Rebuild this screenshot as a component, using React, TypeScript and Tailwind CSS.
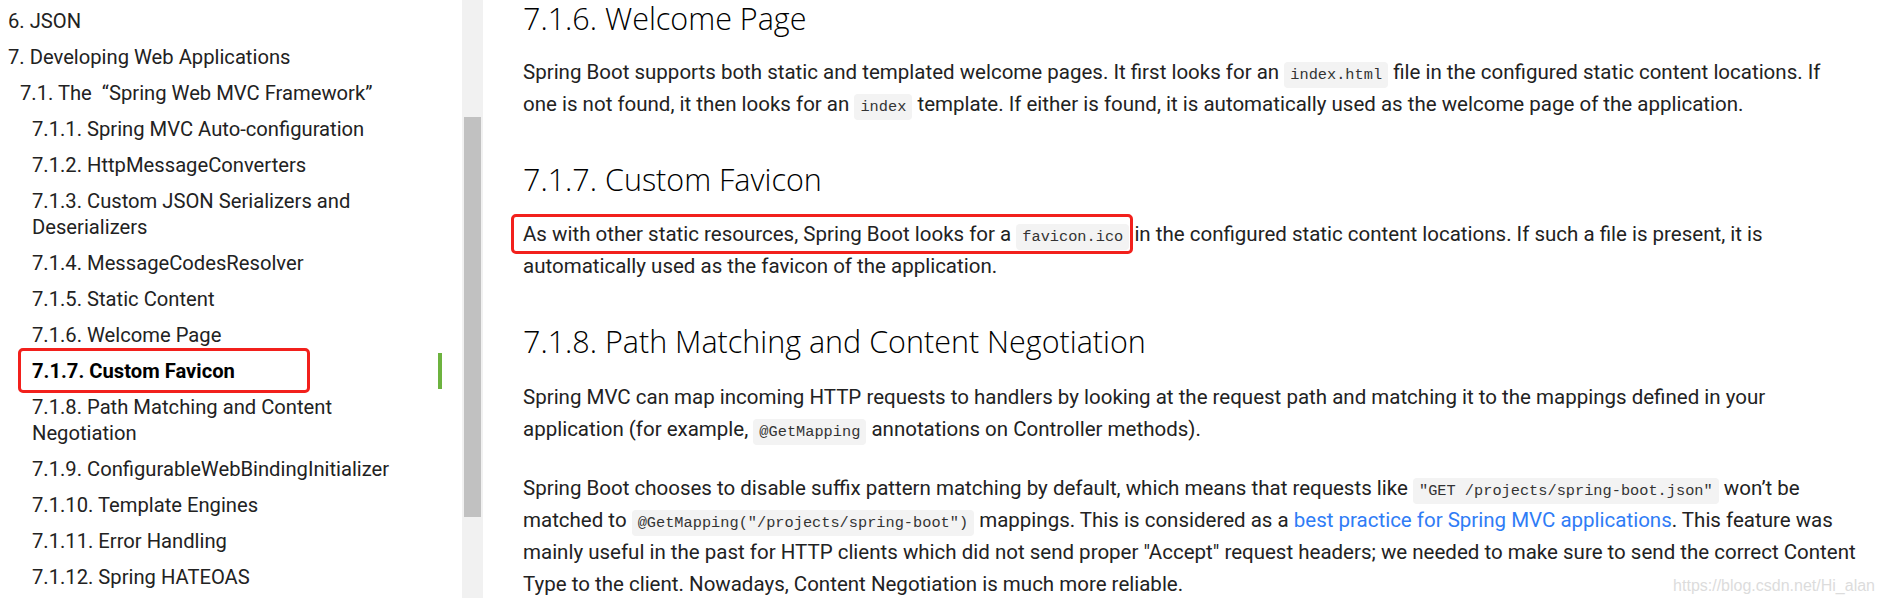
import React from 'react';

const body = '[font-family:Roboto,"Open_Sans",sans-serif]';

type TocItem = { label: React.ReactNode; level: number; active?: boolean };

const toc: TocItem[] = [
  { label: '6. JSON', level: 0 },
  { label: '7. Developing Web Applications', level: 0 },
  { label: '7.1. The\u00a0\u00a0\u201cSpring Web MVC Framework\u201d', level: 1 },
  { label: '7.1.1. Spring MVC Auto-configuration', level: 2 },
  { label: '7.1.2. HttpMessageConverters', level: 2 },
  { label: <>7.1.3. Custom JSON Serializers and<br />Deserializers</>, level: 2 },
  { label: '7.1.4. MessageCodesResolver', level: 2 },
  { label: '7.1.5. Static Content', level: 2 },
  { label: '7.1.6. Welcome Page', level: 2 },
  { label: '7.1.7. Custom Favicon', level: 2, active: true },
  { label: <>7.1.8. Path Matching and Content<br />Negotiation</>, level: 2 },
  { label: '7.1.9. ConfigurableWebBindingInitializer', level: 2 },
  { label: '7.1.10. Template Engines', level: 2 },
  { label: '7.1.11. Error Handling', level: 2 },
  { label: '7.1.12. Spring HATEOAS', level: 2 },
];

const indent = ['pl-2', 'pl-5', 'pl-8'];

function Code({ children }: { children: React.ReactNode }) {
  return (
    <code className="rounded-[4px] bg-[#f3f3f3] px-[6px] py-[4px] text-[15.3px] leading-none text-[#333] [font-family:'Liberation_Mono',monospace]">
      {children}
    </code>
  );
}

function Heading({ children }: { children: React.ReactNode }) {
  return (
    <h3 className="text-[30.5px] leading-[36px] font-light text-black [font-family:'Open_Sans',sans-serif]">
      {children}
    </h3>
  );
}

function Sidebar() {
  return (
    <div className="w-[462px] shrink-0 pt-[3px] pr-[20px]">
      {toc.map((item, i) => (
        <div
          key={i}
          className={`relative py-[5px] text-[20.2px] leading-[26px] text-[#222] ${indent[item.level]} ${
            item.active ? 'border-r-4 border-[#6db33f] font-bold text-black' : ''
          }`}
        >
          {item.label}
          {item.active && (
            <div className="absolute left-[18px] top-[-5px] h-[45px] w-[292px] rounded-[5px] border-[3px] border-[#f2201c]" />
          )}
        </div>
      ))}
    </div>
  );
}

export default function App() {
  return (
    <div className={`flex h-[598px] w-[1884px] overflow-hidden bg-white ${body}`}>
      <Sidebar />
      <div className="w-[21px] shrink-0 bg-[#f1f1f1] px-[2px] pt-[117px]">
        <div className="h-[400px] bg-[#c1c1c1]" />
      </div>
      <div className="relative flex-1 pl-[40px] text-[20.5px] leading-[32px] text-[#222]">
        <Heading>7.1.6. Welcome Page</Heading>
        <p className="mt-[20px] whitespace-nowrap">
          Spring Boot supports both static and templated welcome pages. It first looks for an <Code>index.html</Code> file in the configured static content locations. If
          <br />
          one is not found, it then looks for an <Code>index</Code> template. If either is found, it is automatically used as the welcome page of the application.
        </p>
        <div className="mt-[41px]">
          <Heading>7.1.7. Custom Favicon</Heading>
        </div>
        <p className="mt-[21px] whitespace-nowrap">
          <span className="relative">
            As with other static resources, Spring Boot looks for a <Code>favicon.ico</Code>
            <span className="absolute left-[-12px] right-[-4px] top-[-8px] bottom-[-8px] rounded-[5px] border-[3px] border-[#f2201c]" />
          </span>{' '}
          in the configured static content locations. If such a file is present, it is
          <br />
          automatically used as the favicon of the application.
        </p>
        <div className="mt-[41px]">
          <Heading>7.1.8. Path Matching and Content Negotiation</Heading>
        </div>
        <p className="mt-[22px] whitespace-nowrap">
          Spring MVC can map incoming HTTP requests to handlers by looking at the request path and matching it to the mappings defined in your
          <br />
          application (for example, <Code>@GetMapping</Code> annotations on Controller methods).
        </p>
        <p className="mt-[27px] whitespace-nowrap">
          Spring Boot chooses to disable suffix pattern matching by default, which means that requests like <Code>"GET /projects/spring-boot.json"</Code> won’t be
          <br />
          matched to <Code>@GetMapping("/projects/spring-boot")</Code> mappings. This is considered as a{' '}
          <a className="text-[#2f7cf6]">best practice for Spring MVC applications</a>. This feature was
          <br />
          mainly useful in the past for HTTP clients which did not send proper "Accept" request headers; we needed to make sure to send the correct Content
          <br />
          Type to the client. Nowadays, Content Negotiation is much more reliable.
        </p>
        <div className="absolute bottom-[2px] right-[9px] text-[16px] leading-[20px] text-[#dcdcdc] [font-family:'Liberation_Sans',sans-serif]">
          https://blog.csdn.net/Hi_alan
        </div>
      </div>
    </div>
  );
}
